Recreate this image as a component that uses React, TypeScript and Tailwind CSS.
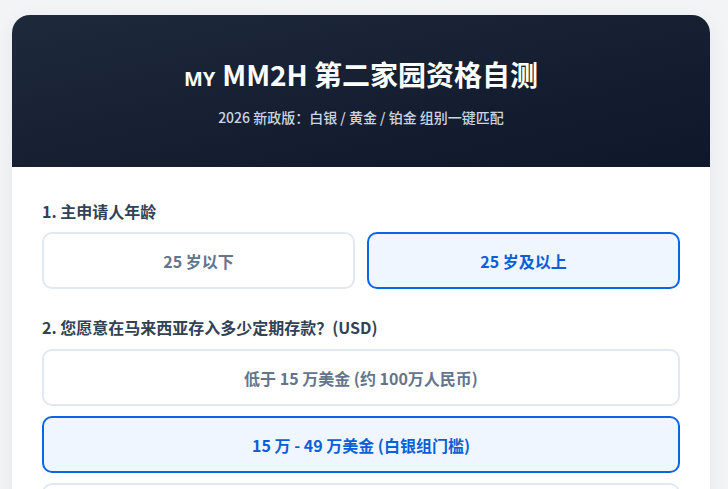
import React from "react";

const font = { fontFamily: '"Noto Sans CJK SC", "Noto Sans", sans-serif' };

function Opt({ label, selected }: { label: string; selected?: boolean }) {
  return (
    <div
      className={
        "flex h-[57px] items-center justify-center rounded-[10px] border-2 text-[16px] font-bold " +
        (selected
          ? "border-[#0a66e4] bg-[#eff6ff] text-[#0a5fd8]"
          : "border-[#e2e8f0] bg-white text-[#64748b]")
      }
    >
      {label}
    </div>
  );
}

export default function App() {
  return (
    <div className="min-h-screen bg-[#f3f4f6] px-3 pt-[15px]" style={font}>
      <div className="w-[698px] overflow-hidden rounded-[18px] bg-white shadow-[0_4px_20px_rgba(0,0,0,0.06)]">
        <div className="flex h-[152px] flex-col items-center justify-center bg-gradient-to-br from-[#1e293b] to-[#0f172a]">
          <h1 className="flex items-baseline text-[28px] font-bold leading-[36px] text-white">
            <span className="mr-[7px] text-[20px]" style={{ fontFamily: '"Noto Sans", sans-serif' }}>MY</span>
            <span>MM2H 第二家园资格自测</span>
          </h1>
          <p className="mt-[10px] text-[14px] font-medium leading-[20px] text-[#cbd5e1]">
            2026 新政版：白银 / 黄金 / 铂金 组别一键匹配
          </p>
        </div>
        <div className="px-[30px] pt-[33px] pb-8">
          <div className="mb-[10px] text-[16px] font-bold leading-[22px] text-[#334155]">1. 主申请人年龄</div>
          <div className="grid grid-cols-2 gap-3">
            <Opt label="25 岁以下" />
            <Opt label="25 岁及以上" selected />
          </div>
          <div className="mt-[27px] mb-[11px] text-[16px] font-bold leading-[22px] text-[#334155]">
            2. 您愿意在马来西亚存入多少定期存款？(USD)
          </div>
          <div className="flex flex-col gap-[10px]">
            <Opt label="低于 15 万美金 (约 100万人民币)" />
            <Opt label="15 万 - 49 万美金 (白银组门槛)" selected />
            <Opt label="50 万 - 99 万美金 (黄金组门槛)" />
          </div>
        </div>
      </div>
    </div>
  );
}
